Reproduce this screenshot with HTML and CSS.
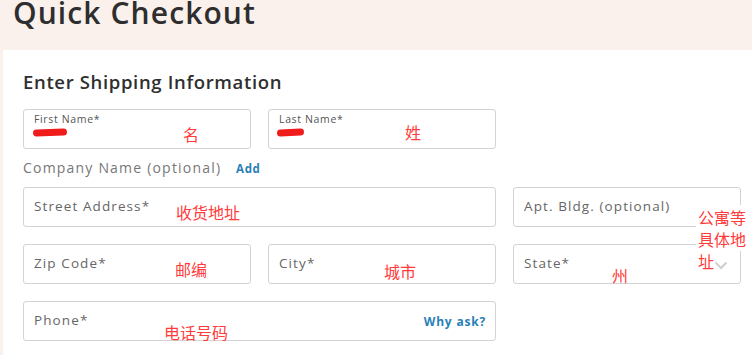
FILE: index.html
```html
<!DOCTYPE html>
<html>
<head>
<meta charset="utf-8">
<link rel="stylesheet" href="styles.css">
</head>
<body>
<header class="top">
  <h1 class="title">Quick Checkout</h1>
</header>
<main class="panel">
  <h2 class="heading">Enter Shipping Information</h2>
  <div class="form">
    <div class="field filled">
      <span class="label">First Name*</span>
      <span class="scribble s1"></span>
      <span class="note n-first">名</span>
    </div>
    <div class="field filled">
      <span class="label">Last Name*</span>
      <span class="scribble s2"></span>
      <span class="note n-last">姓</span>
    </div>
    <div class="company">Company Name (optional) <a class="link add">Add</a></div>
    <div class="field wide">
      <span class="ph">Street Address*</span>
      <span class="note n-street">收货地址</span>
    </div>
    <div class="field">
      <span class="ph">Apt. Bldg. (optional)</span>
    </div>
    <div class="field">
      <span class="ph">Zip Code*</span>
      <span class="note n-zip">邮编</span>
    </div>
    <div class="field">
      <span class="ph">City*</span>
      <span class="note n-city">城市</span>
    </div>
    <div class="field select">
      <span class="ph">State*</span>
      <svg class="chev" width="14" height="9" viewBox="0 0 14 9"><path d="M1.5 1.5 L7 7 L12.5 1.5" fill="none" stroke="#d0d0d0" stroke-width="2.2"/></svg>
      <span class="note n-state">州</span>
    </div>
    <div class="field wide phone">
      <span class="ph">Phone*</span>
      <a class="link why">Why ask?</a>
      <span class="note n-phone">电话号码</span>
    </div>
  </div>
  <div class="note n-apt"><span class="bg">公寓等</span><br><span class="bg">具体地</span><br><span class="bg last">址</span></div>
</main>
</body>
</html>
```
FILE: styles.css
```css
html, body {
  margin: 0;
  padding: 0;
}
body {
  background: #faf1ec;
  font-family: "Open Sans", Lato, sans-serif;
  color: #333;
  width: 752px;
  height: 355px;
  overflow: hidden;
}
.top {
  height: 50px;
  padding-left: 13px;
  box-sizing: border-box;
}
.title {
  margin: 0;
  font-size: 30px;
  line-height: 26px;
  font-weight: 600;
  color: #2e2e2e;
  letter-spacing: 1.1px;
}
.panel {
  position: relative;
  margin-left: 3px;
  background: #fff;
  padding: 20px 20px 0 20px;
  height: 305px;
  box-sizing: border-box;
}
.heading {
  margin: 0 0 15px 0;
  font-size: 18.5px;
  line-height: 24px;
  font-weight: 600;
  color: #2f2f2f;
  letter-spacing: 0.65px;
}
.form {
  display: grid;
  grid-template-columns: 228px 228px 228px;
  column-gap: 17px;
  row-gap: 17px;
}
.field {
  position: relative;
  box-sizing: border-box;
  height: 40px;
  border: 1px solid #d3d3d3;
  border-radius: 3px;
  padding-left: 10px;
  display: flex;
  align-items: center;
}
.field.filled:nth-child(2) {
  grid-column: 2 / span 2;
  width: 228px;
}
.wide {
  grid-column: span 2;
}
.phone {
  grid-column: 1 / span 2;
}
.label {
  position: absolute;
  left: 10px;
  top: 2px;
  font-size: 10.5px;
  color: #555;
  letter-spacing: 0.65px;
}
.ph {
  font-size: 13.5px;
  color: #666;
  letter-spacing: 1.1px;
  margin-top: -2px;
}
.company {
  grid-column: 1 / span 3;
  font-size: 14px;
  color: #777;
  letter-spacing: 1.2px;
  margin: -9px 0 -9px 0;
  height: 22px;
  line-height: 22px;
}
.link {
  color: #2a7fb6;
  font-weight: 700;
  font-size: 11.5px;
  letter-spacing: 0.6px;
}
.add {
  margin-left: 10px;
}
.why {
  position: absolute;
  right: 9px;
  top: 11px;
  font-size: 12px;
  letter-spacing: 0.8px;
}
.chev {
  position: absolute;
  right: 12px;
  top: 16px;
}
.scribble {
  position: absolute;
  background: #f01c1c;
  border-radius: 5px;
  height: 7px;
}
.s1 {
  left: 9px;
  top: 19px;
  width: 34px;
  transform: rotate(-2deg);
}
.s2 {
  left: 8px;
  top: 19px;
  width: 27px;
  transform: rotate(-3deg);
}
.note {
  position: absolute;
  font-family: "Noto Sans CJK SC", sans-serif;
  font-size: 16px;
  line-height: 20px;
  color: #ff3b3b;
  white-space: nowrap;
}
.n-first { left: 159px; top: 14px; }
.n-last { left: 136px; top: 12px; }
.n-street { left: 152px; top: 14px; }
.n-zip { left: 151px; top: 14px; }
.n-city { left: 115px; top: 16px; }
.n-state { left: 98px; top: 20px; }
.n-phone { left: 140px; top: 20px; }
.n-apt {
  left: 693px;
  top: 156px;
  line-height: 22px;
}
.bg {
  background: #fff;
  padding: 0 2px 0 2px;
}
.bg.last {
  padding-right: 0;
}
```
